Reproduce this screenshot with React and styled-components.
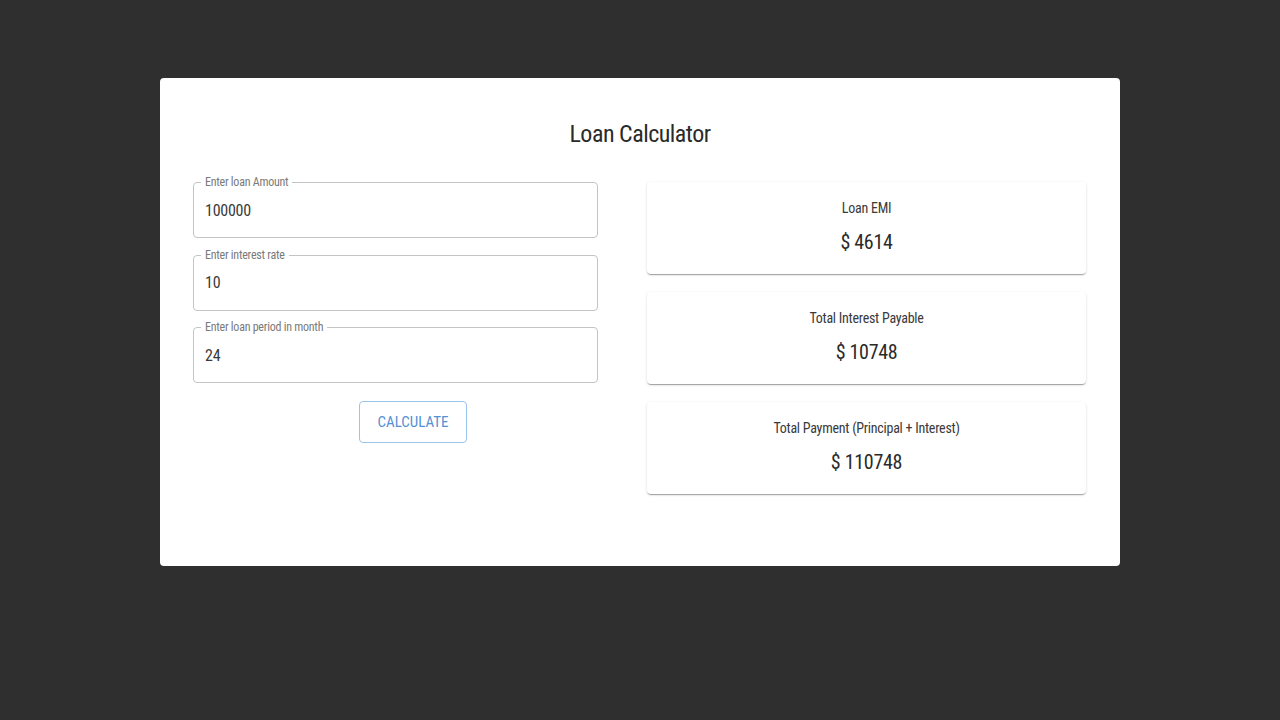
import React from 'react';
import styled, { createGlobalStyle } from 'styled-components';

const GlobalStyle = createGlobalStyle`
  html, body {
    margin: 0;
    padding: 0;
    background: #2f2f2f;
    font-family: Roboto, "Liberation Sans", sans-serif;
    font-stretch: 81%;
    letter-spacing: -0.25px;
  }
  * { box-sizing: border-box; }
`;

const Page = styled.div`
  width: 1280px;
  height: 720px;
  padding-top: 78px;
  display: flex;
  justify-content: center;
  align-items: flex-start;
`;

const Card = styled.div`
  width: 960px;
  height: 488px;
  background: #fff;
  border-radius: 4px;
  padding: 41px 33px 0 33px;
`;

const Title = styled.h1`
  margin: 0 0 33px;
  text-align: center;
  font-weight: 400;
  font-size: 24px;
  line-height: 30px;
  letter-spacing: -0.5px;
  color: #2a2a2a;
`;

const Columns = styled.div`
  display: grid;
  grid-template-columns: 440px 439px;
  column-gap: 14px;
`;

const Form = styled.div`
  display: flex;
  flex-direction: column;
  gap: 16.5px;
`;

const Field = styled.div`
  position: relative;
  width: 405px;
  height: 56px;
  padding: 0 11px;
  border: 1px solid #c4c4c4;
  border-radius: 4px;
  display: flex;
  align-items: center;
`;

const FieldLabel = styled.span`
  position: absolute;
  top: -7px;
  left: 7px;
  padding: 0 4px;
  background: #fff;
  font-size: 12px;
  line-height: 12px;
  color: #7a7a7a;
`;

const Value = styled.div`
  font-size: 16px;
  color: #3a3a3a;
`;

const ButtonRow = styled.div`
  display: flex;
  justify-content: center;
  padding-top: 1px;
`;

const Button = styled.button`
  width: 108px;
  height: 42px;
  background: #fff;
  border: 1px solid #9cc4ea;
  border-radius: 4px;
  color: #5590d3;
  font-family: inherit;
  font-stretch: inherit;
  font-size: 15px;
  font-weight: 400;
  letter-spacing: 0;
  text-transform: uppercase;
  cursor: pointer;
`;

const Results = styled.div`
  display: flex;
  flex-direction: column;
  gap: 18px;
`;

const ResultCard = styled.div`
  height: 92px;
  background: #fff;
  border-radius: 4px;
  box-shadow: 0 2px 1px -1px rgba(0,0,0,0.2), 0 1px 1px 0 rgba(0,0,0,0.14), 0 1px 3px 0 rgba(0,0,0,0.12);
  display: flex;
  flex-direction: column;
  align-items: center;
  padding-top: 17px;
`;

const ResultLabel = styled.div`
  font-size: 14px;
  line-height: 18px;
  color: #3a3a3a;
`;

const ResultValue = styled.div`
  margin-top: 13px;
  font-size: 20px;
  line-height: 24px;
  letter-spacing: -0.3px;
  color: #2a2a2a;
`;

const fields = [
  { label: 'Enter loan Amount', value: '100000' },
  { label: 'Enter interest rate', value: '10' },
  { label: 'Enter loan period in month', value: '24' },
];

const results = [
  { label: 'Loan EMI', value: '$ 4614' },
  { label: 'Total Interest Payable', value: '$ 10748' },
  { label: 'Total Payment (Principal + Interest)', value: '$ 110748' },
];

export default function App() {
  return (
    <>
      <GlobalStyle />
      <Page>
        <Card>
          <Title>Loan Calculator</Title>
          <Columns>
            <Form>
              {fields.map((f) => (
                <Field key={f.label}>
                  <FieldLabel>{f.label}</FieldLabel>
                  <Value>{f.value}</Value>
                </Field>
              ))}
              <ButtonRow>
                <Button>Calculate</Button>
              </ButtonRow>
            </Form>
            <Results>
              {results.map((r) => (
                <ResultCard key={r.label}>
                  <ResultLabel>{r.label}</ResultLabel>
                  <ResultValue>{r.value}</ResultValue>
                </ResultCard>
              ))}
            </Results>
          </Columns>
        </Card>
      </Page>
    </>
  );
}
